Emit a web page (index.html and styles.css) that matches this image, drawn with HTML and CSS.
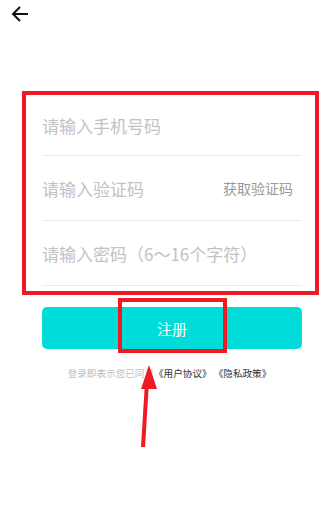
FILE: index.html
```html
<!DOCTYPE html>
<html lang="zh-CN">
<head>
    <meta charset="UTF-8">
    <meta name="viewport" content="width=device-width, initial-scale=1.0">
    <title>注册</title>
    <link rel="stylesheet" href="styles.css">
</head>
<body>
    <div class="page">
        <div class="header">
            <svg class="back" width="20" height="20" viewBox="0 0 20 20">
                <path d="M18 10H3M10 3L3 10L10 17" fill="none" stroke="#111" stroke-width="2"/>
            </svg>
        </div>

        <div class="form-box">
            <div class="row row-first">
                <span class="placeholder">请输入手机号码</span>
            </div>
            <div class="row">
                <span class="placeholder">请输入验证码</span>
                <span class="code-btn">获取验证码</span>
            </div>
            <div class="row">
                <span class="placeholder">请输入密码（6～16个字符）</span>
            </div>
        </div>

        <button class="submit">注册</button>

        <p class="agree">登录即表示您已同意<span class="link">《用户协议》 《隐私政策》</span></p>

        <!-- annotations -->
        <div class="mark-btn"></div>
        <svg class="mark-arrow" width="30" height="100" viewBox="0 0 30 100">
            <path d="M10 87L14 22" stroke="#ed1c24" stroke-width="4" fill="none"/>
            <polygon points="16,5 8,29 24,29" fill="#ed1c24"/>
        </svg>
    </div>
</body>
</html>
```

FILE: styles.css
```css
body {
    margin: 0;
    background-color: #fff;
    font-family: "Noto Sans CJK SC", "Noto Sans", sans-serif;
}
.page {
    position: relative;
    width: 332px;
    height: 506px;
    overflow: hidden;
}
.header {
    height: 28px;
    padding: 4px 0 0 10px;
    box-sizing: border-box;
}
.back {
    display: block;
}
.form-box {
    margin: 63px 0 0 22px;
    width: 297px;
    height: 204px;
    border: 4px solid #ed1c24;
    box-sizing: border-box;
    padding: 0 13px 0 16px;
}
.row {
    display: flex;
    align-items: center;
    justify-content: space-between;
    height: 65px;
    border-bottom: 1px solid #ebebeb;
    box-sizing: border-box;
    padding-right: 9px;
}
.row-first {
    height: 61px;
}
.placeholder {
    font-size: 17px;
    color: #c2c2c2;
}
.code-btn {
    font-size: 14px;
    color: #9a9a9a;
}
.submit {
    display: block;
    margin: 12px 0 0 42px;
    width: 260px;
    height: 42px;
    border: none;
    border-radius: 5px;
    background-color: #00dcd7;
    color: #fff;
    font-family: inherit;
    font-size: 15px;
}
.agree {
    margin: 17px 0 0 0;
    text-align: center;
    font-size: 9.6px;
    color: #bdbdbd;
    line-height: 14px;
    padding-left: 7px;
}
.agree .link {
    color: #333;
}
.mark-btn {
    position: absolute;
    left: 118px;
    top: 298px;
    width: 109px;
    height: 55px;
    border: 4px solid #ed1c24;
    box-sizing: border-box;
}
.mark-arrow {
    position: absolute;
    left: 133px;
    top: 360px;
}
```
